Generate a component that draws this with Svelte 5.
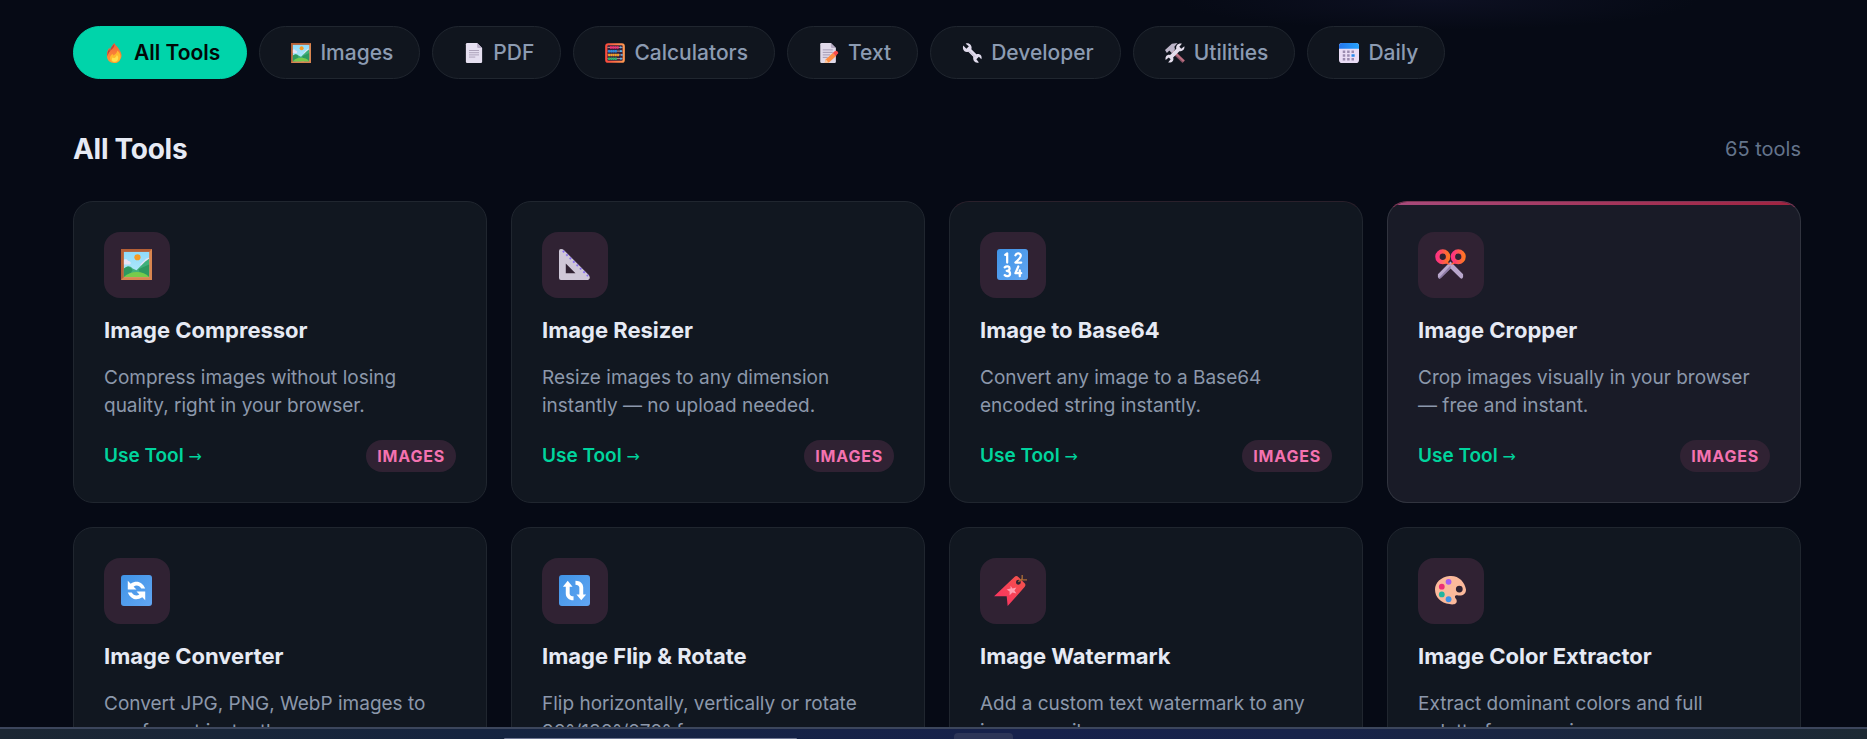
<script>
  const filters = [
    { icon: 'fire', label: 'All Tools', active: true },
    { icon: 'picture', label: 'Images' },
    { icon: 'page', label: 'PDF' },
    { icon: 'abacus', label: 'Calculators' },
    { icon: 'memo', label: 'Text' },
    { icon: 'wrench', label: 'Developer' },
    { icon: 'tools', label: 'Utilities' },
    { icon: 'calendar', label: 'Daily' }
  ];
  const tools = [
    { icon: 'picture', name: 'Image Compressor', text: 'Compress images without losing quality, right in your browser.' },
    { icon: 'ruler', name: 'Image Resizer', text: 'Resize images to any dimension instantly — no upload needed.' },
    { icon: 'numbers', name: 'Image to Base64', text: 'Convert any image to a Base64 encoded string instantly.', leaving: true },
    { icon: 'scissors', name: 'Image Cropper', text: 'Crop images visually in your browser — free and instant.', lit: true },
    { icon: 'convert', name: 'Image Converter', text: 'Convert JPG, PNG, WebP images to any format instantly.' },
    { icon: 'flip', name: 'Image Flip & Rotate', text: 'Flip horizontally, vertically or rotate 90°/180°/270° free.' },
    { icon: 'bookmark', name: 'Image Watermark', text: 'Add a custom text watermark to any image easily.' },
    { icon: 'palette', name: 'Image Color Extractor', text: 'Extract dominant colors and full palette from any image.' }
  ];
</script>

<svg class="defs" width="0" height="0" aria-hidden="true">
  <defs>
    <linearGradient id="g-fire" x1="0" y1="0" x2="0" y2="1"><stop offset="0" stop-color="#f2603c" /><stop offset="1" stop-color="#ff9a35" /></linearGradient>
    <linearGradient id="g-sky" x1="0" y1="0" x2="0" y2="1"><stop offset="0" stop-color="#8fdcfb" /><stop offset="1" stop-color="#b8eafa" /></linearGradient>
    <linearGradient id="g-abacus" x1="0" y1="0" x2="1" y2="0"><stop offset="0" stop-color="#fb4a3c" /><stop offset="1" stop-color="#ff9850" /></linearGradient>
    <linearGradient id="g-blue" x1="0" y1="0" x2="1" y2="1"><stop offset="0" stop-color="#3f93e6" /><stop offset="1" stop-color="#62a6f2" /></linearGradient>
    <linearGradient id="g-ring" x1="0" y1="0" x2="1" y2="0"><stop offset="0" stop-color="#ff3380" /><stop offset="1" stop-color="#ff7426" /></linearGradient>
    <linearGradient id="g-tag" x1="0" y1="1" x2="1" y2="0"><stop offset="0" stop-color="#fb2f64" /><stop offset="1" stop-color="#f2554a" /></linearGradient>
    <linearGradient id="g-cal" x1="0" y1="0" x2="1" y2="0"><stop offset="0" stop-color="#2476ee" /><stop offset="1" stop-color="#27a2fa" /></linearGradient>
  </defs>
</svg>

{#snippet glyph(name)}
  <svg class="glyph" viewBox="0 0 32 32" aria-hidden="true">
    {#if name === 'fire'}
      <path fill="url(#g-fire)" d="M15 0c1 3 5 6 7 9 4 6 6 11 3 16-2 5-5 7-10 7C7 32 3 27 3 20c0-5 1-9 4-13l1 5c1-4 4-9 7-12Z" />
      <path fill="#bd443e" d="M15 1c-4 4-7 8-7 13l-1-5c-3 4-4 8-3 13 1-7 5-10 9-14 2-2 2-5 2-7Z" />
      <path fill="#ffb92e" d="M20 12c5 5 6 10 4 14-2 4-6 5-9 5-4 0-7-3-7-7 0-3 2-5 4-7l1 3c3-1 6-4 7-8Z" />
      <path fill="#ffe04d" d="M19 19c4 4 2 10-3 11-5 0-6-4-4-7l2 1c2 0 4-2 5-5Z" />
    {:else if name === 'picture'}
      <path fill="#d9854f" d="M0 0h32v32H0z" />
      <path fill="#b56036" d="M0 0h32l-3 3H3v26l-3 3z" />
      <path fill="url(#g-sky)" d="M3 3h26v26H3z" />
      <path fill="#e9e4f5" d="M3 11c2-1 4 0 4 1 3 0 4 3 2 4H3zM20 16l6-6 3-1v4l-8 6z" />
      <circle cx="17" cy="8.500" r="3.200" fill="#f59b23" />
      <path fill="#3fb07b" d="M3 21c3-4 6-4 9-1l4 2 9-9 4-3v15l-13 4H3z" />
      <path fill="#2e9960" d="M3 20c4-3 7-2 9 2l-5 7H3zM29 16v13h-8l-3-8z" />
      <path fill="#77cb4b" d="M3 29c7-7 20-7 26 0z" />
    {:else if name === 'page'}
      <path fill="#e5dff0" d="M3 2q0-2 2-2h16l8 8v22q0 2-2 2H5q-2 0-2-2z" />
      <path fill="#b9afc8" d="M21 0v6q0 2 2 2h6z" />
      <path stroke="#aaa0b8" stroke-width="1.500" d="M8 12h16M8 15.500h16M8 19h16M8 22.500h10" />
    {:else if name === 'abacus'}
      <rect x="2" y="2" width="28" height="28" rx="3" fill="#32213c" stroke="url(#g-abacus)" stroke-width="3.500" />
      <path stroke="#eabeb0" stroke-width="1.200" d="M4 7h24M4 13h24M4 19h24M4 25h24" />
      <path stroke="#f52e73" stroke-width="4" stroke-dasharray="3 .6" d="M8 7h14" />
      <path stroke="#258ce6" stroke-width="4" stroke-dasharray="3 .6" d="M5 13h14" />
      <path stroke="#f5a128" stroke-width="4" stroke-dasharray="3 .6" d="M5 19h18" />
      <path stroke="#27b56a" stroke-width="4" stroke-dasharray="3 .6" d="M5 25h14" />
      <path stroke="#52b6ef" stroke-width="3" d="M24 7h2M24 13h3M26 19h2M24 25h3" />
    {:else if name === 'memo'}
      <path fill="#e0d9e9" d="M2 2q0-2 2-2h15l8 8v22q0 2-2 2H4q-2 0-2-2z" />
      <path fill="#b4a9c1" d="M19 0v6q0 2 2 2h6z" />
      <path stroke="#a198b0" stroke-width="1.500" d="M6 11h16M6 15h16M6 19h12M6 23h8" />
      <path fill="#ff8d43" d="M22 16l5 5-11 10-7 1 2-6z" />
      <path fill="#fb4c48" d="M22 16l3-3q3-2 5 1t-1 4l-2 3z" />
      <path fill="#f9cba8" d="M11 26l4 5-6 1z" />
    {:else if name === 'wrench'}
      <path fill="#e1dced" d="M2 4l5 5 4-4-5-4c5-2 11 3 9 9l8 8c5-2 10 2 8 8l-4-4-4 4 4 5c-6 2-10-3-9-9l-8-8C4 16 0 10 2 4Z" />
      <path stroke="#aaa2ba" stroke-width="1" d="M12 13l9 9" />
    {:else if name === 'tools'}
      <path fill="#865064" d="M11 8l21 20-4 4L7 12z" />
      <path fill="#bd7180" d="M12 10l19 18-2 2L10 12z" />
      <path fill="#bcb5c9" d="M0 11L11 1l9-1-5 6 1 4-5 6-4-4-4 4z" />
      <path fill="#e4ddec" d="M31 5l-5 4-3-3 4-5c-6-1-10 3-9 8L8 19c-5-1-8 3-7 8l5-4 3 3-4 5c6 1 10-3 8-8l10-10c5 0 9-3 8-8Z" />
    {:else if name === 'calendar'}
      <rect width="32" height="32" rx="5" fill="#e9dcf5" />
      <path fill="url(#g-cal)" d="M0 9V5q0-5 5-5h22q5 0 5 5v4z" />
      <path fill="#9b8bb0" d="M6 12h4v4H6zm7 0h4v4h-4zm7 0h4v4h-4zM6 18h4v4H6zm7 0h4v4h-4zM6 24h4v4H6zm7 0h4v4h-4zm7 0h4v4h-4z" />
      <path fill="#2389ee" d="M20 18h5v4h-5z" />
    {:else if name === 'ruler'}
      <path fill="#cfc8d8" fill-rule="evenodd" d="M0 2Q0 0 2 0q2 0 3 1l26 26q2 4-1 5H2q-2 0-2-2zm7 13v10h10z" />
      <path stroke="#8b72f0" stroke-width="2" stroke-dasharray="2 3" d="M4 2l26 26" />
    {:else if name === 'numbers'}
      <rect width="32" height="32" rx="3" fill="url(#g-blue)" />
      <g fill="none" stroke="#fff" stroke-width="2.300" stroke-linecap="round" stroke-linejoin="round">
        <path d="M8.500 6l2-1.500V14M19 6.500c1-3 6-2.500 5.500.8-.3 2-3 4.200-5.500 6.700h6M8 19c2-2 5-1 5 1s-2 2.500-3 2.500c2 0 3.500 1 3.500 3 0 3-4 3-5.500 1.500M22 18l-3 7h6M23.500 22v6" />
      </g>
    {:else if name === 'scissors'}
      <path fill="#b9a7cc" d="M16 13l13 13v3q-1 3-3 1L16 20 6 30q-2 2-3-1v-3z" />
      <path fill="#8e7ba6" d="M16 17v3L6 30q-1 1-2 0z" />
      <path fill="#ff5b34" d="M11 11l5 5 5-5 3 3-6 2h-4l-6-2z" />
      <circle cx="8" cy="8" r="5.500" fill="none" stroke="url(#g-ring)" stroke-width="4.500" />
      <circle cx="24" cy="8" r="5.500" fill="none" stroke="url(#g-ring)" stroke-width="4.500" />
    {:else if name === 'convert'}
      <rect width="32" height="32" rx="3" fill="url(#g-blue)" />
      <path fill="#fff" d="M7 6l3 3c6-4 12-2 15 5h-4c-2-3-5-4-8-2l3 3H7zM25 26l-3-3c-6 4-12 2-15-5h4c2 3 5 4 8 2l-3-3h9z" />
    {:else if name === 'flip'}
      <rect width="32" height="32" rx="3" fill="url(#g-blue)" />
      <path fill="#fff" d="M4 12l5-6 5 6h-3v7c0 2 2 3 4 3v4c-5 0-8-3-8-7v-7zM28 20l-5 6-5-6h3v-7c0-2-2-3-4-3V6c5 0 8 3 8 7v7z" />
    {:else if name === 'bookmark'}
      <path fill="url(#g-tag)" fill-rule="evenodd" d="M18 2q2-2 4 0l7 7q1 2-1 4L11 32l-1-10-13 0zM22 5a2.500 2.500 0 1 0 .1 5 2.500 2.500 0 0 0 0-5z" />
      <path fill="none" stroke="#a96b35" stroke-width="1.400" d="M22 7l4-3V0M25 5h6" />
      <path fill="#ff9eb0" d="M14 11l2 3 4-1-2 3 2 3-4-1-3 3v-4l-3-2 4-1z" />
    {:else}
      <path fill="#fbb99b" fill-rule="evenodd" d="M15 1c9-1 16 6 17 14 0 5-4 7-9 6-3 0-3 2-1 4 2 5-3 6-7 5C6 29 0 23 0 15 0 8 6 2 15 1zm10 10a3.500 3.500 0 1 0 .1 7 3.500 3.500 0 0 0 0-7z" />
      <circle cx="14" cy="7" r="3" fill="#a85cf1" />
      <circle cx="7" cy="12" r="3" fill="#ec2f77" />
      <circle cx="7" cy="20" r="3" fill="#22b5a0" />
      <circle cx="14" cy="25" r="3" fill="#3f92e8" />
    {/if}
  </svg>
{/snippet}

<div class="screen">
  <main>
    <nav class="filters" aria-label="Categories">
      {#each filters as f}
        <button type="button" class="pill" class:active={f.active}>
          <span class="slot">{@render glyph(f.icon)}</span>{f.label}
        </button>
      {/each}
    </nav>

    <header class="heading">
      <h1>All Tools</h1>
      <span class="count">65 tools</span>
    </header>

    <section class="grid">
      {#each tools as t}
        <article class="card" class:lit={t.lit} class:leaving={t.leaving}>
          <div class="tile">{@render glyph(t.icon)}</div>
          <h2>{t.name}</h2>
          <p>{t.text}</p>
          <div class="foot">
            <a href="#tool">Use Tool <span class="arrow">→</span></a>
            <span class="tag">IMAGES</span>
          </div>
        </article>
      {/each}
    </section>
  </main>

  <footer class="taskbar">
    <div class="search"></div>
    <div class="app"></div>
  </footer>
</div>

<style>
  :global(body) {
    margin: 0;
    background: #060a15;
  }
  .defs {
    position: absolute;
  }
  .screen {
    box-sizing: border-box;
    height: 100vh;
    display: flex;
    flex-direction: column;
    overflow: hidden;
    font-family: Inter, sans-serif;
    color: #e6eaf4;
    background: radial-gradient(ellipse 260px 30px at 77% 0, #0d1022, transparent), #060a15;
  }
  main {
    flex: 1;
    min-height: 0;
    overflow: hidden;
    padding: 26px 66px 0 73px;
  }
  .filters {
    display: flex;
    flex-wrap: wrap;
    gap: 12px;
  }
  .pill {
    display: flex;
    align-items: center;
    gap: 5px;
    height: 53px;
    padding: 1px 26px 0 27px;
    border: 1px solid #20262f;
    border-radius: 27px;
    background: #10151e;
    color: #8c9bb2;
    font: 500 21px/24px Inter, sans-serif;
  }
  .pill.active {
    background: #00d4aa;
    border-color: #00d4aa;
    color: #020807;
    font-weight: 600;
  }
  .glyph {
    display: block;
    overflow: visible;
  }
  .slot {
    display: flex;
    justify-content: center;
    width: 28px;
  }
  .slot .glyph {
    width: 20px;
    height: 20px;
  }
  .heading {
    display: flex;
    align-items: center;
    justify-content: space-between;
    margin: 52px 0 34px;
  }
  h1 {
    margin: 0;
    font-size: 28px;
    line-height: 36px;
    font-weight: 700;
    letter-spacing: -0.01em;
  }
  .count {
    font-size: 20px;
    line-height: 24px;
    color: #64748b;
  }
  .grid {
    display: grid;
    grid-template-columns: repeat(4, 1fr);
    gap: 24px;
  }
  .card {
    padding: 30px;
    border: 1px solid #20262f;
    border-radius: 20px;
    background: #111720;
  }
  .card.lit {
    border-color: #31343f;
    background: linear-gradient(90deg, #a84b7c, #a0233f) top / 100% 3px no-repeat padding-box, #191b27;
    border-top-color: #7c3654;
  }
  .card.leaving {
    border-top-color: #2a202b;
  }
  .tile {
    display: grid;
    place-items: center;
    box-sizing: border-box;
    width: 66px;
    height: 66px;
    padding: 0 1px 1px 0;
    border-radius: 16px;
    background: #302233;
  }
  .tile .glyph {
    width: 31px;
    height: 31px;
  }
  h2 {
    margin: 18px 0 20px;
    font-size: 22px;
    line-height: 28px;
    font-weight: 700;
  }
  p {
    margin: 0 0 20px;
    padding-right: 4px;
    font-size: 19px;
    line-height: 28px;
    color: #8c98ab;
  }
  .foot {
    display: flex;
    align-items: center;
    justify-content: space-between;
  }
  a {
    color: #00d49d;
    font-size: 19px;
    line-height: 24px;
    font-weight: 600;
    text-decoration: none;
  }
  .arrow {
    font-family: "DejaVu Sans", sans-serif;
    font-size: 16px;
    font-weight: 400;
  }
  .tag {
    padding: 4px 11px;
    border-radius: 16px;
    background: #302233;
    color: #f472b0;
    font-size: 16px;
    line-height: 24px;
    font-weight: 700;
    letter-spacing: 0.05em;
  }
  .taskbar {
    display: grid;
    grid-template-columns: 27% 293px 157px 59px;
    align-items: end;
    box-sizing: border-box;
    height: 12px;
    border-top: 2px solid #3c465c;
    background: linear-gradient(90deg, #1b2632, #15243f 25%, #16214b 55%, #17234a 70%, #1c2933);
  }
  .search {
    grid-column: 2;
    height: 1px;
    background: #6c7591;
    border-radius: 1px 1px 0 0;
  }
  .app {
    grid-column: 4;
    height: 6px;
    border-radius: 4px 4px 0 0;
    background: #2c3557;
  }
</style>
